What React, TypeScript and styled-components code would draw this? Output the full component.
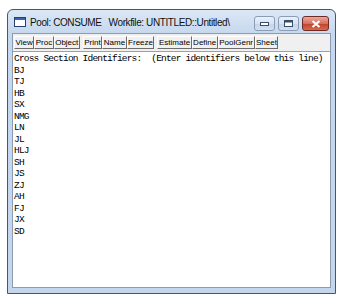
import React from 'react';
import styled, { createGlobalStyle } from 'styled-components';

const GlobalStyle = createGlobalStyle`
  html, body {
    margin: 0;
    padding: 0;
    background: #ffffff;
  }
`;

const groups = [
  ['View', 'Proc', 'Object'],
  ['Print', 'Name', 'Freeze'],
  ['Estimate', 'Define', 'PoolGenr', 'Sheet'],
];

const ids = ['BJ', 'TJ', 'HB', 'SX', 'NMG', 'LN', 'JL', 'HLJ', 'SH', 'JS', 'ZJ', 'AH', 'FJ', 'JX', 'SD'];

const WindowIcon = () => (
  <svg width="12" height="10" viewBox="0 0 12 10">
    <rect x="0.5" y="0.5" width="11" height="9" fill="#ffffff" stroke="#2b3f6b" />
    <rect x="1" y="1" width="10" height="2" fill="#3a63b0" />
  </svg>
);

const App = () => {
  return (
    <Page>
      <GlobalStyle />
      <Window>
        <TitleBar>
          <WindowIcon />
          <Title>Pool: CONSUME&nbsp;&nbsp;&nbsp;Workfile: UNTITLED::Untitled\</Title>
          <Controls>
            <CtrlGroup>
              <CtrlButton>
                <svg width="9" height="4" viewBox="0 0 9 4">
                  <rect x="0.5" y="0.5" width="8" height="3" fill="#fff" stroke="#3a4e6c" />
                </svg>
              </CtrlButton>
              <CtrlButton>
                <svg width="9" height="7" viewBox="0 0 9 7">
                  <rect x="0.5" y="0.5" width="8" height="6" fill="#fff" stroke="#3a4e6c" />
                  <rect x="1" y="1" width="7" height="1.5" fill="#3a4e6c" />
                </svg>
              </CtrlButton>
            </CtrlGroup>
            <CloseButton>
              <svg width="10" height="8" viewBox="0 0 10 8">
                <path d="M1.5 1 L8.5 7 M8.5 1 L1.5 7" stroke="#ffffff" strokeWidth="2" />
              </svg>
            </CloseButton>
          </Controls>
        </TitleBar>
        <Client>
          <Toolbar>
            {groups.map((g, i) => (
              <ToolGroup key={i}>
                {g.map((b) => (
                  <ToolButton key={b}>{b}</ToolButton>
                ))}
              </ToolGroup>
            ))}
          </Toolbar>
          <Content>
            <Line>Cross Section Identifiers:  (Enter identifiers below this line)</Line>
            {ids.map((id) => (
              <Line key={id}>{id}</Line>
            ))}
          </Content>
        </Client>
      </Window>
    </Page>
  );
};

const Page = styled.div`
  width: 346px;
  height: 304px;
  padding: 9px 0 0 7px;
  box-sizing: border-box;
`;

const Window = styled.div`
  width: 329px;
  height: 285px;
  box-sizing: border-box;
  border: 1px solid #4a5566;
  border-radius: 6px 6px 0 0;
  background: linear-gradient(to bottom, #dbe7f5 0px, #c6d8ee 24px, #c3d6ee 100%);
  display: flex;
  flex-direction: column;
  padding: 0 4px 5px 4px;
`;

const TitleBar = styled.div`
  height: 23px;
  display: flex;
  align-items: center;
  padding: 0 2px 0 2px;
  gap: 4px;
  flex: none;
`;

const Title = styled.div`
  font-family: 'Liberation Sans', 'Noto Sans', sans-serif;
  font-size: 10px;
  letter-spacing: -0.4px;
  color: #111111;
  white-space: pre;
  flex: 1;
  min-width: 0;
  overflow: hidden;
  margin-top: 2px;
`;

const Controls = styled.div`
  display: flex;
  align-items: flex-start;
  gap: 3px;
  align-self: flex-start;
  margin-top: 6px;
  flex: none;
`;

const CtrlGroup = styled.div`
  display: flex;
  gap: 3px;
`;

const CtrlButton = styled.div`
  width: 19px;
  height: 13px;
  display: flex;
  align-items: center;
  justify-content: center;
  border: 1px solid #8a9cb6;
  border-radius: 3px;
  background: linear-gradient(to bottom, #eaf1fa 0%, #d6e3f2 50%, #c3d4ea 51%, #d2e0f1 100%);
`;

const CloseButton = styled.div`
  width: 25px;
  height: 13px;
  display: flex;
  align-items: center;
  justify-content: center;
  border: 1px solid #6e2b25;
  border-radius: 3px;
  background: linear-gradient(to bottom, #e9a99c 0%, #d7705f 50%, #c2412c 51%, #d66a4f 100%);
`;

const Client = styled.div`
  flex: 1;
  display: flex;
  flex-direction: column;
  border: 1px solid #8b9bb2;
  background: #ffffff;
  min-height: 0;
`;

const Toolbar = styled.div`
  display: flex;
  gap: 3px;
  padding: 2px 0 2px 1px;
  background: #f0f0f0;
  border-bottom: 1px solid #a0a0a0;
  flex: none;
`;

const ToolGroup = styled.div`
  display: flex;
`;

const ToolButton = styled.div`
  font-family: 'Liberation Sans', 'DejaVu Sans', sans-serif;
  font-size: 8px;
  line-height: 11px;
  padding: 0 0.5px;
  color: #000000;
  background: #f0f0f0;
  border-top: 1px solid #ffffff;
  border-left: 1px solid #ffffff;
  border-right: 1px solid #6d6d6d;
  border-bottom: 1px solid #6d6d6d;
`;

const Content = styled.div`
  flex: 1;
  padding: 1px 0 0 1px;
  font-family: 'Liberation Mono', 'DejaVu Sans Mono', monospace;
  font-size: 9.5px;
  letter-spacing: -0.8px;
  color: #000000;
`;

const Line = styled.div`
  white-space: pre;
  line-height: 11.5px;
  height: 11.5px;
`;

export default App;
